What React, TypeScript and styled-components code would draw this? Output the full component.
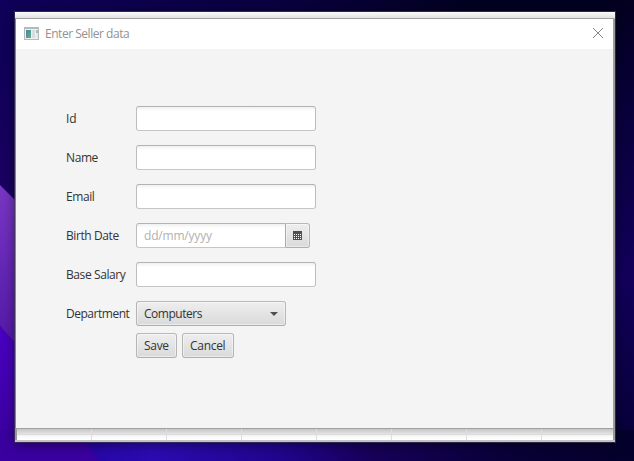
import React from "react";
import styled, { createGlobalStyle } from "styled-components";

const GlobalStyle = createGlobalStyle`
  * { box-sizing: border-box; }
  html, body { margin: 0; padding: 0; overflow: hidden; }
  body, input, button { font-family: "Open Sans", "Noto Sans", sans-serif; font-size: 12px; }
`;

const Desktop = styled.main`
  position: relative;
  width: 634px;
  height: 461px;
  padding: 12px 19px 19px 15px;
  overflow: hidden;
  background: #08003a;
`;

const Wallpaper = styled.svg`
  position: absolute;
  inset: 0;
  display: block;
`;

const ParentWindow = styled.div`
  position: relative;
  display: flex;
  flex-direction: column;
  width: 600px;
  height: 430px;
  padding-top: 6px;
  background: linear-gradient(#fbfbfb 0, #e2e2e2 6px, #999 7px, #999 100%);
  box-shadow: 0 0 0 1px rgba(65, 60, 85, 0.65), 0 2px 12px rgba(0, 0, 0, 0.5);
`;

const Dialog = styled.section`
  display: flex;
  flex-direction: column;
  width: 599px;
  height: 411px;
  border: 1px solid #a0a0a0;
  border-left-color: #85858d;
  background: #f4f4f4;
`;

const TitleBar = styled.header`
  display: flex;
  align-items: center;
  height: 30px;
  padding: 0 9px 0 8px;
  background: #fff;
`;

const Title = styled.h1`
  flex: 1;
  margin: 0 0 0 5px;
  font-size: 12px;
  font-weight: 400;
  line-height: 16px;
  letter-spacing: -0.47px;
  color: #929292;
`;

const CloseButton = styled.button`
  display: flex;
  padding: 0;
  border: 0;
  background: none;
`;

const Form = styled.form`
  display: flex;
  flex-direction: column;
  padding: 57px 0 0 50px;
`;

const Row = styled.div`
  display: grid;
  grid-template-columns: 70px auto;
  justify-content: start;
  align-items: center;
  height: 25px;
  margin-bottom: 14px;
`;

const Label = styled.label<{ $tracking?: number }>`
  line-height: 17px;
  white-space: nowrap;
  color: #333;
  letter-spacing: ${({ $tracking = -0.4 }) => $tracking}px;
`;

const TextInput = styled.input<{ $joined?: boolean }>`
  width: ${({ $joined }) => ($joined ? 150 : 180)}px;
  height: 25px;
  padding: 0 7px;
  border: 1px solid;
  border-color: #b3b3b3 #bdbdbd #c6c6c6;
  border-right-color: ${({ $joined }) => ($joined ? "#ababab" : "#bdbdbd")};
  border-radius: ${({ $joined }) => ($joined ? "3px 0 0 3px" : "3px")};
  outline: 0;
  background: linear-gradient(#f0f0f0, #fff 4px);
  letter-spacing: -0.2px;
  &::placeholder { color: #b1b1b1; opacity: 1; }
`;

const DateField = styled.div`
  display: flex;
`;

const Control = styled.button<{ $width: number; $tracking?: number }>`
  display: flex;
  align-items: center;
  justify-content: space-between;
  width: ${({ $width }) => $width}px;
  height: 25px;
  padding: 0 7px;
  border: 1px solid;
  border-color: #b8b8b8 #b5b5b5 #aeaeae;
  border-radius: 3px;
  background: linear-gradient(#eee, #dadada);
  box-shadow: inset 0 0 0 1px rgba(255, 255, 255, 0.45);
  line-height: 17px;
  color: #333;
  letter-spacing: ${({ $tracking = -0.3 }) => $tracking}px;
`;

const CalendarButton = styled(Control)`
  justify-content: center;
  padding: 0;
  border-left: 0;
  border-radius: 0 3px 3px 0;
`;

const Actions = styled.div`
  display: flex;
  gap: 5px;
  margin-top: -7px;
  padding-left: 70px;
`;

const TableFooter = styled.div`
  height: 11px;
  margin: 0 2px;
  background:
    linear-gradient(transparent 5px, #ddd 5px, #ddd 6px, transparent 6px),
    repeating-linear-gradient(90deg, transparent 0 74px, #dedede 74px 75px),
    linear-gradient(#c5c5c5 0, #e4e4e4 5px, #f8f8f8 7px, #fff);
`;

const BottomEdge = styled.div`
  height: 2px;
  background: #c3c3c7;
`;

const AppIcon = styled.svg`
  display: block;
  margin-bottom: 1px;
`;

function DesktopArt() {
  return (
    <Wallpaper width="634" height="461" aria-hidden="true">
      <defs>
        <linearGradient id="top" x2="1" y2="0">
          <stop stopColor="#10005a" /><stop offset=".45" stopColor="#09003f" />
          <stop offset=".75" stopColor="#030020" /><stop offset="1" stopColor="#030020" />
        </linearGradient>
        <linearGradient id="right" x2="0" y2="1">
          <stop stopColor="#030020" /><stop offset=".25" stopColor="#09003c" />
          <stop offset=".6" stopColor="#12005c" /><stop offset="1" stopColor="#060035" />
        </linearGradient>
        <linearGradient id="shade" x2="0" y2="1">
          <stop stopColor="#1c0064" stopOpacity="0" /><stop offset="1" stopColor="#1c0064" />
        </linearGradient>
        <linearGradient id="violet" x2="0" y2="1">
          <stop stopColor="#7937c5" /><stop offset="1" stopColor="#5118a8" />
        </linearGradient>
        <linearGradient id="indigo" x2="0" y2="1">
          <stop stopColor="#4a00c4" /><stop offset="1" stopColor="#39009b" />
        </linearGradient>
        <linearGradient id="bottom" x2="1" y2="0">
          <stop stopColor="#220098" /><stop offset=".22" stopColor="#2c0bb2" />
          <stop offset=".43" stopColor="#21058d" /><stop offset=".58" stopColor="#170058" />
          <stop offset=".8" stopColor="#090038" /><stop offset="1" stopColor="#04002c" />
        </linearGradient>
      </defs>
      <path d="M0 0H634V461H0Z" fill="url(#top)" />
      <path d="M600 0H634V461H600Z" fill="url(#right)" />
      <path d="M0 60H25V210L0 185Z" fill="url(#shade)" />
      <path d="M0 185L25 210V355L0 326Z" fill="url(#violet)" />
      <path d="M0 326L25 355V461H0Z" fill="url(#indigo)" />
      <path d="M15 430H634V461H15Z" fill="url(#bottom)" />
      <path d="M0 430H80L98 461H0Z" fill="#3a00a0" />
    </Wallpaper>
  );
}

function WindowIcon() {
  return (
    <AppIcon width="16" height="13" viewBox="0 0 16 13" shapeRendering="crispEdges" aria-hidden="true">
      <defs>
        <linearGradient id="screen" x2="1" y2="1">
          <stop stopColor="#4685a2" /><stop offset="1" stopColor="#69ad82" />
        </linearGradient>
      </defs>
      <path fill="#b3b9bd" d="M0 0h15v13H0z" />
      <path fill="#eef0f1" d="M1 2h13v10H1z" />
      <path fill="url(#screen)" d="M2 3h5v8H2z" />
      <path fill="#dadddd" d="M8 3h3v8H8z" />
      <path fill="#9bc6bd" d="M12 3h2v3h-2z" />
      <path fill="#e5e7e9" d="M12 6h2v5h-2z" />
    </AppIcon>
  );
}

function CalendarIcon() {
  return (
    <svg width="9" height="9" viewBox="0 0 9 9" shapeRendering="crispEdges" aria-hidden="true">
      <path fill="#505050" d="M0 0h9v9H0z" />
      {[3, 5, 7].map((y) => [1, 3, 5, 7].map((x) => (
        <rect key={`${x}-${y}`} x={x} y={y} width="1" height="1" fill="#fff" />
      )))}
    </svg>
  );
}

export default function App() {
  return (
    <>
      <GlobalStyle />
      <Desktop>
        <DesktopArt />
        <ParentWindow>
          <Dialog>
            <TitleBar>
              <WindowIcon />
              <Title>Enter Seller data</Title>
              <CloseButton aria-label="Close">
                <svg width="12" height="12" viewBox="0 0 12 12" fill="none" stroke="#858585">
                  <path d="M1 0l10 10M11 0L1 10" />
                </svg>
              </CloseButton>
            </TitleBar>
            <Form>
              <Row><Label htmlFor="id" $tracking={0}>Id</Label><TextInput id="id" /></Row>
              <Row><Label htmlFor="name">Name</Label><TextInput id="name" /></Row>
              <Row><Label htmlFor="email">Email</Label><TextInput id="email" /></Row>
              <Row>
                <Label htmlFor="birth">Birth Date</Label>
                <DateField>
                  <TextInput id="birth" $joined placeholder="dd/mm/yyyy" />
                  <CalendarButton type="button" $width={24} aria-label="Choose date"><CalendarIcon /></CalendarButton>
                </DateField>
              </Row>
              <Row><Label htmlFor="salary">Base Salary</Label><TextInput id="salary" /></Row>
              <Row>
                <Label htmlFor="department" $tracking={-0.48}>Department</Label>
                <Control id="department" type="button" $width={150} $tracking={-0.48}>
                  Computers
                  <svg width="8" height="4" viewBox="0 0 8 4"><path d="M0 0h8L4 4z" fill="#505050" /></svg>
                </Control>
              </Row>
              <Actions>
                <Control type="button" $width={41}>Save</Control>
                <Control type="button" $width={52}>Cancel</Control>
              </Actions>
            </Form>
          </Dialog>
          <TableFooter />
          <BottomEdge />
        </ParentWindow>
      </Desktop>
    </>
  );
}
